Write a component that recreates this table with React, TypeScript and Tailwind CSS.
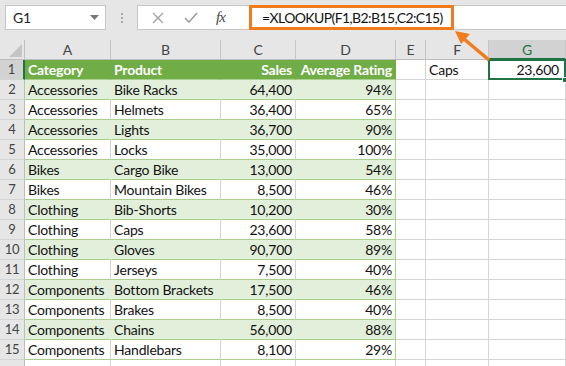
import React from "react";

type Row = [string, string, string, string];

const rows: Row[] = [
  ["Accessories", "Bike Racks", "64,400", "94%"],
  ["Accessories", "Helmets", "36,400", "65%"],
  ["Accessories", "Lights", "36,700", "90%"],
  ["Accessories", "Locks", "35,000", "100%"],
  ["Bikes", "Cargo Bike", "13,000", "54%"],
  ["Bikes", "Mountain Bikes", "8,500", "46%"],
  ["Clothing", "Bib-Shorts", "10,200", "30%"],
  ["Clothing", "Caps", "23,600", "58%"],
  ["Clothing", "Gloves", "90,700", "89%"],
  ["Clothing", "Jerseys", "7,500", "40%"],
  ["Components", "Bottom Brackets", "17,500", "46%"],
  ["Components", "Brakes", "8,500", "40%"],
  ["Components", "Chains", "56,000", "88%"],
  ["Components", "Handlebars", "8,100", "29%"],
];

const cols = ["A", "B", "C", "D", "E", "F", "G"];

const gridCols = "grid grid-cols-[25px_86px_110px_75px_100px_30px_63px_77px]";

function RowHead({ n, active }: { n?: number; active?: boolean }) {
  return (
    <div
      className={
        "h-[20px] flex items-center justify-center text-[13px] text-[#444] border-b border-b-[#d4d4d4] " +
        (active ? "bg-[#d2d2d2] border-r-2 border-r-[#217346]" : "bg-[#e6e6e6] border-r border-r-[#bdbdbd]")
      }
    >
      {n}
    </div>
  );
}

function Blank() {
  return <div className="h-[20px] border-b border-r border-[#d4d4d4] bg-white" />;
}

export default function App() {
  return (
    <div className="relative w-[566px] h-[366px] overflow-hidden bg-white font-['Lato','Open_Sans',sans-serif] text-[#111] tracking-[-0.2px]">
      {/* formula bar */}
      <div className="flex h-[40px] bg-[#e6e6e6] pt-[5px] pl-[5px]">
        <div className="w-[101px] h-[25px] bg-white border border-[#c6c6c6] flex items-center justify-between pl-[7px] pr-[6px] text-[14px] text-[#222]">
          <span>G1</span>
          <svg width="9" height="5" viewBox="0 0 9 5">
            <path d="M0 0 H9 L4.5 5 Z" fill="#777" />
          </svg>
        </div>
        <div className="w-[31px] h-[25px] flex flex-col items-center justify-center gap-[2px]">
          <span className="w-[2px] h-[2px] bg-[#a8a8a8]" />
          <span className="w-[2px] h-[2px] bg-[#a8a8a8]" />
          <span className="w-[2px] h-[2px] bg-[#a8a8a8]" />
        </div>
        <div className="flex-1 h-[25px] flex">
          <div className="w-[112px] h-[25px] bg-white border border-r-0 border-[#c6c6c6] flex items-center">
            <svg width="12" height="12" viewBox="0 0 12 12" className="ml-[14px]">
              <path d="M1 1 L11 11 M11 1 L1 11" stroke="#a0a0a0" strokeWidth="1.4" />
            </svg>
            <svg width="14" height="12" viewBox="0 0 14 12" className="ml-[20px]">
              <path d="M1 6 L5 10 L13 1" stroke="#a0a0a0" strokeWidth="1.6" fill="none" />
            </svg>
            <span className="ml-[18px] text-[15px] italic font-['Liberation_Serif',serif] text-[#444] tracking-[-1px]">
              fx
            </span>
          </div>
          <div className="flex-1 h-[25px] bg-white border-y border-[#c6c6c6] flex">
            <div className="w-[205px] h-[25px] -mt-px border-[3px] border-[#f07c1e] flex items-center pl-[10px] text-[14px] text-[#111] tracking-[-0.6px]">
              =XLOOKUP(F1,B2:B15,C2:C15)
            </div>
          </div>
        </div>
      </div>

      {/* column headers */}
      <div className={gridCols}>
        <div className="h-[20px] bg-[#e6e6e6] border-r border-b border-[#bdbdbd] flex items-end justify-end pr-[2px] pb-[2px]">
          <svg width="13" height="13" viewBox="0 0 13 13">
            <path d="M13 0 V13 H0 Z" fill="#c4c4c4" />
          </svg>
        </div>
        {cols.map((c) =>
          c === "G" ? (
            <div
              key={c}
              className="h-[20px] bg-[#d2d2d2] border-b-2 border-b-[#217346] border-r border-r-[#c6c6c6] flex items-center justify-center text-[14px] text-[#217346]"
            >
              {c}
            </div>
          ) : (
            <div
              key={c}
              className="h-[20px] bg-[#e6e6e6] border-b border-b-[#bdbdbd] border-r border-r-[#c6c6c6] flex items-center justify-center text-[14px] text-[#444]"
            >
              {c}
            </div>
          )
        )}
      </div>

      {/* row 1: table header + lookup */}
      <div className={gridCols}>
        <RowHead n={1} active />
        <div className="h-[20px] bg-[#70ad47] border-b border-b-[#a9d08e] border-r border-r-[#70ad47] pl-[3px] flex items-center text-[14px] font-bold text-white">
          Category
        </div>
        <div className="h-[20px] bg-[#70ad47] border-b border-b-[#a9d08e] border-r border-r-[#70ad47] pl-[3px] flex items-center text-[14px] font-bold text-white">
          Product
        </div>
        <div className="h-[20px] bg-[#70ad47] border-b border-b-[#a9d08e] border-r border-r-[#70ad47] pr-[3px] flex items-center justify-end text-[14px] font-bold text-white">
          Sales
        </div>
        <div className="h-[20px] bg-[#70ad47] border-b border-b-[#a9d08e] border-r border-r-[#70ad47] pr-[3px] flex items-center justify-end text-[14px] font-bold text-white whitespace-nowrap">
          Average Rating
        </div>
        <Blank />
        <div className="h-[20px] border-b border-r border-[#d4d4d4] pl-[3px] flex items-center text-[14px]">
          Caps
        </div>
        <div className="relative h-[20px] border-b border-r border-[#d4d4d4]">
          <div className="absolute -left-px -top-px right-[-1px] bottom-[-1px] border-2 border-[#217346] flex items-center justify-end pr-[5px] text-[14px]">
            23,600
          </div>
          <div className="absolute right-[-3px] bottom-[-4px] w-[6px] h-[6px] bg-[#217346] border border-white" />
        </div>
      </div>

      {/* data rows */}
      {rows.map((r, i) => {
        const banded = i % 2 === 0;
        const bg = banded ? "bg-[#e2efda]" : "bg-white";
        const inner = banded ? "border-r-[#e2efda]" : "border-r-[#d4d4d4]";
        return (
          <div key={i} className={gridCols}>
            <RowHead n={i + 2} />
            <div className={`h-[20px] ${bg} border-b border-b-[#a9d08e] border-r ${inner} pl-[3px] flex items-center text-[14px] whitespace-nowrap`}>
              {r[0]}
            </div>
            <div className={`h-[20px] ${bg} border-b border-b-[#a9d08e] border-r ${inner} pl-[3px] flex items-center text-[14px] whitespace-nowrap`}>
              {r[1]}
            </div>
            <div className={`h-[20px] ${bg} border-b border-b-[#a9d08e] border-r ${inner} pr-[3px] flex items-center justify-end text-[14px]`}>
              {r[2]}
            </div>
            <div className={`h-[20px] ${bg} border-b border-b-[#a9d08e] border-r border-r-[#a9d08e] pr-[3px] flex items-center justify-end text-[14px]`}>
              {r[3]}
            </div>
            <Blank />
            <Blank />
            <Blank />
          </div>
        );
      })}

      {/* next row, only its top edge is in view */}
      <div className={gridCols}>
        <RowHead />
        <Blank />
        <Blank />
        <Blank />
        <Blank />
        <Blank />
        <Blank />
        <Blank />
      </div>

      {/* callout arrow from the formula to the result cell */}
      <svg className="absolute left-0 top-0 pointer-events-none" width="566" height="366">
        <line x1="489" y1="60" x2="464" y2="39" stroke="#f07c1e" strokeWidth="3.5" />
        <path d="M455 31 L470 34 L461 44 Z" fill="#f07c1e" />
      </svg>
    </div>
  );
}
